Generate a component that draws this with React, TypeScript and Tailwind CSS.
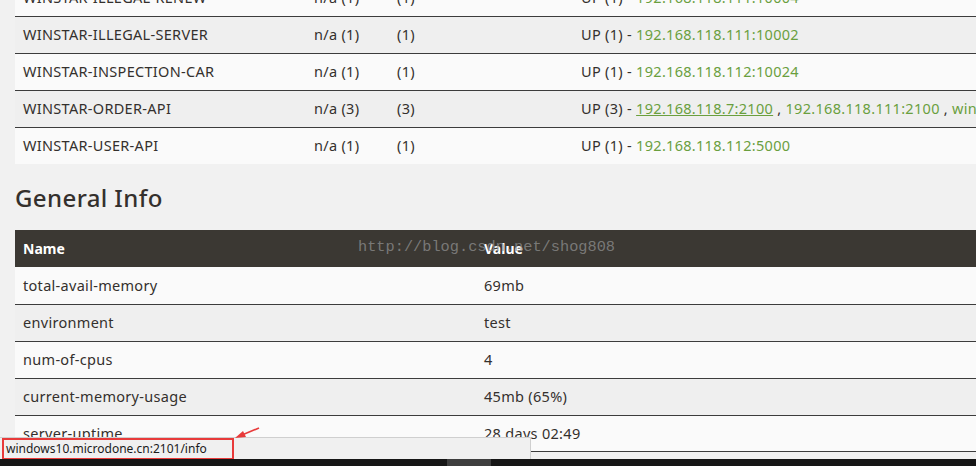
import React from 'react';

const body = { fontFamily: '"Noto Sans", "Open Sans", Arial, sans-serif' };

interface AppRow {
  name: string;
  amis: string;
  zones: string;
  count: number;
  hosts: string[];
  hovered?: boolean;
}

const apps: AppRow[] = [
  { name: 'WINSTAR-ILLEGAL-RENEW', amis: '1', zones: '1', count: 1, hosts: ['192.168.118.111:10004'] },
  { name: 'WINSTAR-ILLEGAL-SERVER', amis: '1', zones: '1', count: 1, hosts: ['192.168.118.111:10002'] },
  { name: 'WINSTAR-INSPECTION-CAR', amis: '1', zones: '1', count: 1, hosts: ['192.168.118.112:10024'] },
  {
    name: 'WINSTAR-ORDER-API',
    amis: '3',
    zones: '3',
    count: 3,
    hosts: ['192.168.118.7:2100', '192.168.118.111:2100', 'windows10.microdone.cn:2101'],
    hovered: true,
  },
  { name: 'WINSTAR-USER-API', amis: '1', zones: '1', count: 1, hosts: ['192.168.118.112:5000'] },
];

const info = [
  ['total-avail-memory', '69mb'],
  ['environment', 'test'],
  ['num-of-cpus', '4'],
  ['current-memory-usage', '45mb (65%)'],
  ['server-uptime', '28 days 02:49'],
];

export default function App() {
  return (
    <div
      className="flex h-[466px] w-[976px] flex-col overflow-hidden bg-[#f1f1f1] text-[14.5px] tracking-[0.3px] text-[#34302d]"
      style={body}
    >
      <div className="relative flex-1 overflow-hidden pl-[15px]">
        {/* instances table, scrolled so the first row is cut */}
        <div className="-mt-[21px] w-[1100px]">
          {apps.map((app, i) => (
            <div
              key={app.name}
              className={`flex h-[37px] items-center whitespace-nowrap ${i > 0 ? 'border-t border-[#3c3c3c]' : ''} ${
                i % 2 === 1 ? 'bg-[#efefef]' : 'bg-[#fafafa]'
              }`}
            >
              <div className="w-[291px] shrink-0 px-2">{app.name}</div>
              <div className="w-[83px] shrink-0 px-2">n/a ({app.amis})</div>
              <div className="w-[184px] shrink-0 px-2">({app.zones})</div>
              <div className="flex-1 px-2">
                UP ({app.count}) -{' '}
                {app.hosts.map((h, j) => (
                  <React.Fragment key={h}>
                    {j > 0 && ' , '}
                    <a className={`text-[#6a9f3e] ${app.hovered && j === 0 ? 'underline' : ''}`}>{h}</a>
                  </React.Fragment>
                ))}
              </div>
            </div>
          ))}
        </div>

        <h2 className="mt-[19px] mb-[17px] text-[24px] leading-[30px] font-medium tracking-[0.4px] text-[#34302d]">
          General Info
        </h2>

        <div className="w-[961px]">
          <div className="relative flex h-[37px] items-center bg-[#3b3833] text-white">
            <div className="w-[461px] shrink-0 px-2 text-[14px] font-bold tracking-normal">Name</div>
            <div className="flex-1 px-2 text-[14px] font-bold tracking-normal">Value</div>
            <span
              className="pointer-events-none absolute top-[6px] left-[343px] text-[15.3px] tracking-normal text-[#8a8a8a]/80"
              style={{ fontFamily: '"Liberation Mono", monospace' }}
            >
              http://blog.csdn.net/shog808
            </span>
          </div>
          {info.map(([k, v], i) => (
            <div
              key={k}
              className={`flex h-[37px] items-center ${i > 0 ? 'border-t border-[#3c3c3c]' : ''} ${
                i % 2 === 1 ? 'bg-[#efefef]' : 'bg-[#fafafa]'
              } ${i === info.length - 1 ? 'border-b' : ''}`}
            >
              <div className="w-[461px] shrink-0 px-2">{k}</div>
              <div className="flex-1 px-2">{v}</div>
            </div>
          ))}
        </div>

        {/* browser status bar */}
        <div className="absolute bottom-0 left-0 flex h-[22px] w-[531px] items-center border-t border-r border-[#cfcfcf] bg-[#f0f0f0]">
          <div className="ml-[2px] flex h-[22px] w-[232px] items-center border-2 border-[#e83a3a] pl-[2px] text-[12px] tracking-normal text-[#1a1a1a]">
            windows10.microdone.cn:2101/info
          </div>
        </div>
        <svg className="absolute left-[232px] top-[425px]" width="30" height="16" viewBox="0 0 30 16">
          <line x1="27" y1="3" x2="10" y2="10" stroke="#e83a3a" strokeWidth="1.6" />
          <polygon points="3,13 11,6 14,12" fill="#e83a3a" />
        </svg>
      </div>
      <div className="flex h-[7px] bg-[#161616]">
        <div className="ml-[447px] w-[44px] bg-[#3e3e3e]" />
      </div>
    </div>
  );
}
